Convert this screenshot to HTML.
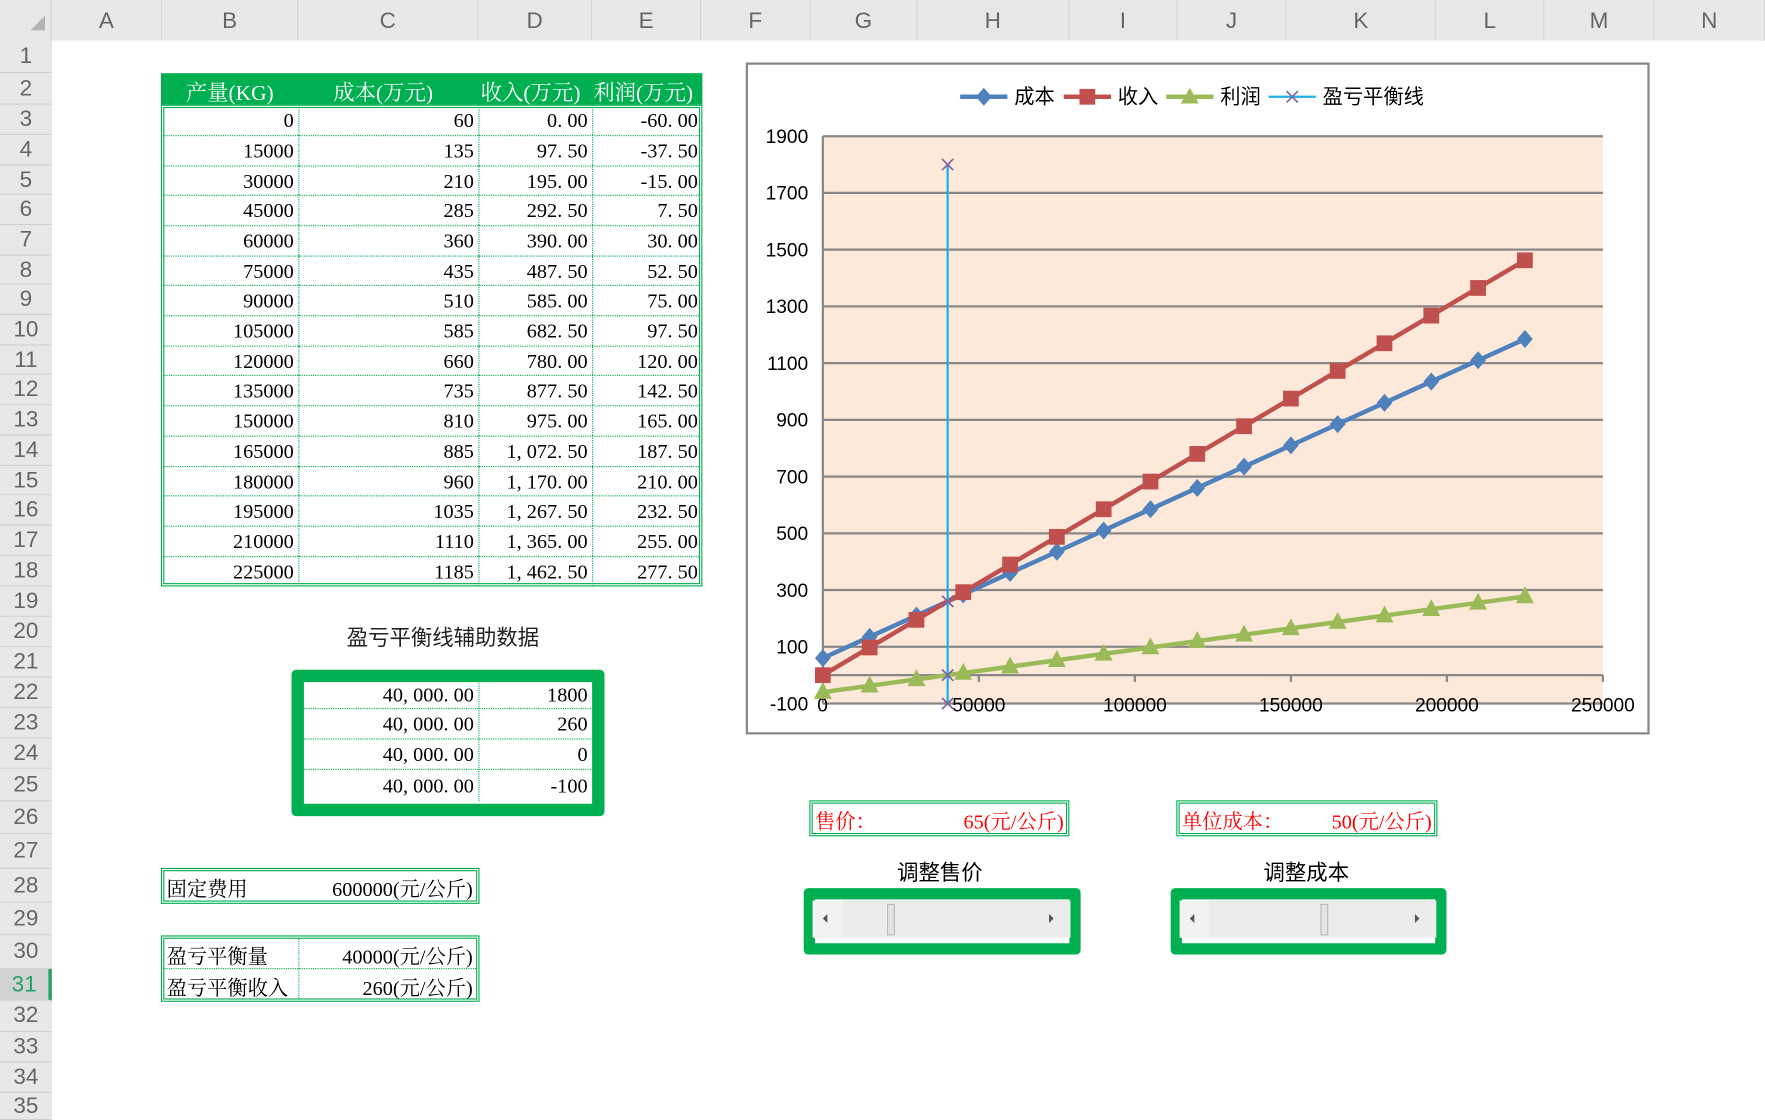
<!DOCTYPE html>
<html><head><meta charset="utf-8">
<style>
html,body{margin:0;padding:0;background:#fff;overflow:hidden;width:1765px;height:1120px}
#w{position:absolute;left:0;top:0;width:1568px;height:995px;transform:scale(1.12564,1.12563);transform-origin:0 0;font-family:"Liberation Serif","Noto Serif CJK SC",serif;}
.a{position:absolute;box-sizing:border-box}
.hd{background:#e8e8e8;color:#666;font-family:"Liberation Sans",sans-serif;font-size:20px;text-align:center}
.num{font-size:18px;text-align:right;color:#000;white-space:nowrap}
.t{font-family:"Liberation Serif","Noto Serif CJK SC",serif}
</style></head><body><div id="w">
<div class="a" style="left:0;top:0;width:1568px;height:36px;background:#e8e8e8;border-bottom:1px solid #c8c8c8"></div>
<div class="a" style="left:0;top:0;width:46px;height:995px;background:#e8e8e8;border-right:1px solid #c8c8c8"></div>
<div id="g"></div>
<div class="a" style="left:27px;top:14px;width:0;height:0;border-left:13px solid transparent;border-bottom:13px solid #b4b4b4"></div>
<svg class="a" style="left:0;top:0" width="1568" height="995" id="s"></svg>
</div>
<script>
var g=document.getElementById('g'),h='';
var cols=[['A',46,144],['B',144,265],['C',265,425],['D',425,526],['E',526,623],['F',623,720],['G',720,815],['H',815,950],['I',950,1046],['J',1046,1143],['K',1143,1276],['L',1276,1372],['M',1372,1470],['N',1470,1568]];
cols.forEach(function(c){h+='<div class="a hd" style="left:'+c[1]+'px;top:0;width:'+(c[2]-c[1])+'px;height:36px;line-height:38px;border-right:1px solid #d4d4d4">'+c[0]+'</div>';});
var rc=[50,79,106,133,160,186,213,240,266,293,320,346,373,400,427,453,480,507,534,561,588,615,642,669,697,726,756,787,816,846,875,903,930,957,984];
for(var i=0;i<35;i++){var tt=i==0?36:(rc[i-1]+rc[i])/2,bot=i==34?995:(rc[i]+rc[i+1])/2;
var st=i==30?'background:#d2d2d2;color:#21a366;border-right:3px solid #21a366;':'';
h+='<div class="a hd" style="left:0;top:'+tt+'px;width:46px;height:'+(bot-tt)+'px;line-height:'+(bot-tt)+'px;border-bottom:1px solid #d0d0d0;'+st+'">'+(i+1)+'</div>';}
function rb(n){return n==1?36:(rc[n-2]+rc[n-1])/2}
var cx=[143,265,425,526,624];
h+='<div class="a" style="left:143px;top:'+rb(2)+'px;width:481px;height:'+(rb(3)-rb(2))+'px;background:#00b050"></div>';
var hdr=['产量(KG)','成本(万元)','收入(万元)','利润(万元)'],hx=[[165,240],[296,392],[427,524],[527,622]];
hdr.forEach(function(t,k){h+='<div class="a t" style="left:'+hx[k][0]+'px;top:'+(rb(2)+3)+'px;color:#fff;font-size:19px;white-space:nowrap">'+t+'</div>';});
h+='<div class="a" style="left:143px;top:'+rb(3)+'px;width:481px;height:'+(rb(19)-rb(3))+'px;border:3px double #00b050"></div>';
function f2(v){var s=Math.abs(v).toFixed(2),p=s.split('.');p[0]=p[0].replace(/\B(?=(\d{3})+(?!\d))/g,', ');return (v<0?'-':'')+p[0]+'. '+p[1];}
for(var r=0;r<16;r++){var x=r*15000,c=60+x*0.005,rv=x*0.0065,pf=rv-c;var t=rb(r+3),b=rb(r+4);
 var vals=[x,c,f2(rv),f2(pf)];
 for(var k=0;k<4;k++){h+='<div class="a num" style="left:'+cx[k]+'px;top:'+t+'px;width:'+(cx[k+1]-cx[k]-4)+'px;height:'+(b-t)+'px;line-height:'+(b-t+2)+'px">'+vals[k]+'</div>';
  if(k<3)h+='<div class="a" style="left:'+cx[k+1]+'px;top:'+t+'px;height:'+(b-t)+'px;border-left:1px dotted #00b050"></div>';}
 if(r<15)h+='<div class="a" style="left:146px;top:'+b+'px;width:475px;border-top:1px dotted #00b050"></div>';}
h+='<div class="a" style="left:308px;top:552px;font-size:19px;font-family:\'Noto Sans CJK SC\',sans-serif;color:#222">盈亏平衡线辅助数据</div>';
h+='<div class="a" style="left:259px;top:595px;width:278px;height:130px;border:11px solid #00b050;border-radius:4px"></div>';
var av=[1800,260,0,-100];
for(var r=0;r<4;r++){var t=r==0?604:rb(r+22),b=r==3?712:rb(r+23);
 h+='<div class="a num" style="left:270px;top:'+t+'px;width:151px;height:'+(b-t)+'px;line-height:'+(b-t+2)+'px">40, 000. 00</div>';
 h+='<div class="a num" style="left:425px;top:'+t+'px;width:97px;height:'+(b-t)+'px;line-height:'+(b-t+2)+'px">'+av[r]+'</div>';
 if(r<3)h+='<div class="a" style="left:270px;top:'+b+'px;width:255px;border-top:1px dotted #00b050"></div>';}
h+='<div class="a" style="left:425px;top:604px;height:108px;border-left:1px dotted #00b050"></div>';
h+='<div class="a" style="left:143px;top:771px;width:283px;height:32px;border:3px double #00b050"></div>';
h+='<div class="a t" style="left:148px;top:776px;font-size:18px">固定费用</div><div class="a num" style="left:265px;top:776px;width:155px">600000(元/公斤)</div>';
h+='<div class="a" style="left:143px;top:831px;width:283px;height:59px;border:3px double #00b050"></div>';
h+='<div class="a" style="left:146px;top:860px;width:277px;border-top:1px dotted #00b050"></div><div class="a" style="left:265px;top:834px;height:53px;border-left:1px dotted #00b050"></div>';
h+='<div class="a t" style="left:148px;top:836px;font-size:18px">盈亏平衡量</div><div class="a num" style="left:265px;top:836px;width:155px">40000(元/公斤)</div>';
h+='<div class="a t" style="left:148px;top:864px;font-size:18px">盈亏平衡收入</div><div class="a num" style="left:265px;top:864px;width:155px">260(元/公斤)</div>';
function pb(x,w,l,r){h+='<div class="a" style="left:'+x+'px;top:711px;width:'+w+'px;height:32px;border:3px double #00b050"></div>';
 h+='<div class="a t" style="left:'+(x+5)+'px;top:716px;font-size:18px;color:#f00">'+l+'</div><div class="a num" style="left:'+x+'px;top:716px;width:'+(w-5)+'px;color:#f00">'+r+'</div>';}
pb(719,231,'售价：','65(元/公斤)');pb(1045,232,'单位成本：','50(元/公斤)');
function sb(x,w,cl,lab,th){h+='<div class="a" style="left:'+(x+(w-80)/2)+'px;top:761px;font-size:19px;font-family:\'Noto Sans CJK SC\',sans-serif">'+lab+'</div>';
 h+='<div class="a" style="left:'+x+'px;top:789px;width:'+w+'px;height:59px;border:10px solid #00b050;border-radius:4px;background:#fff"></div>';
 h+='<div class="a" style="left:'+(x+8)+'px;top:800px;width:'+(w-17)+'px;height:33px;background:#ececec;border-top:1px solid #e2e2e2"></div>';
 h+='<div class="a" style="left:'+(x+8)+'px;top:800px;width:26px;height:33px;background:#f2f2f2"></div>';
 h+='<div class="a" style="left:'+(x+17)+'px;top:812px;border-right:4px solid #555;border-top:4px solid transparent;border-bottom:4px solid transparent"></div>';
 h+='<div class="a" style="left:'+(x+w-28)+'px;top:812px;border-left:4px solid #555;border-top:4px solid transparent;border-bottom:4px solid transparent"></div>';
 h+='<div class="a" style="left:'+th+'px;top:803px;width:7px;height:28px;background:#e4e4e4;border:1px solid #bbb"></div>';}
sb(714,246,0,'调整售价',788);sb(1040,245,0,'调整成本',1173);
g.innerHTML=h;
var s='';
s+='<rect x="663.5" y="56.5" width="801" height="595" fill="#fff" stroke="#888" stroke-width="2"/>';
s+='<rect x="731" y="121" width="693" height="504" fill="#fde9d9"/>';
function Y(v){return 625-(v+100)*0.252}function X(x){return 731+x*693/250000}
for(var v=-100;v<=1900;v+=200){s+='<line x1="731" x2="1424" y1="'+Y(v)+'" y2="'+Y(v)+'" stroke="#888" stroke-width="2"/>';
 s+='<text x="718" y="'+(Y(v)+6)+'" font-size="17" text-anchor="end" font-family="Liberation Sans">'+v+'</text>';}
s+='<line x1="731" x2="731" y1="121" y2="625" stroke="#888" stroke-width="2"/>';
s+='<line x1="731" x2="1424" y1="'+Y(0)+'" y2="'+Y(0)+'" stroke="#888" stroke-width="2"/>';
for(var k=0;k<=5;k++){var xx=X(k*50000);s+='<line x1="'+xx+'" x2="'+xx+'" y1="'+Y(0)+'" y2="'+(Y(0)+6)+'" stroke="#888" stroke-width="2"/>';
 s+='<text x="'+(k==0?726:xx)+'" y="632" font-size="17" text-anchor="'+(k==0?'start':'middle')+'" font-family="Liberation Sans">'+(k*50000)+'</text>';}
var pc=[],pr=[],pp=[];for(var i=0;i<16;i++){var x=i*15000;pc.push([X(x),Y(60+x*.005)]);pr.push([X(x),Y(x*.0065)]);pp.push([X(x),Y(x*.0015-60)]);}
function pl(p,c){return '<polyline fill="none" stroke="'+c+'" stroke-width="4" points="'+p.map(function(q){return q.join(',')}).join(' ')+'"/>';}
s+=pl(pc,'#4f81bd');pc.forEach(function(q){s+='<polygon fill="#4f81bd" points="'+q[0]+','+(q[1]-8)+' '+(q[0]+7)+','+q[1]+' '+q[0]+','+(q[1]+8)+' '+(q[0]-7)+','+q[1]+'"/>';});
s+=pl(pr,'#c0504d');pr.forEach(function(q){s+='<rect fill="#c0504d" x="'+(q[0]-7)+'" y="'+(q[1]-7)+'" width="14" height="14"/>';});
s+=pl(pp,'#9bbb59');pp.forEach(function(q){s+='<polygon fill="#9bbb59" points="'+q[0]+','+(q[1]-9)+' '+(q[0]+8)+','+(q[1]+6)+' '+(q[0]-8)+','+(q[1]+6)+'"/>';});
var bx=X(40000);s+='<line x1="'+bx+'" x2="'+bx+'" y1="'+Y(1800)+'" y2="'+Y(-100)+'" stroke="#1fb0e6" stroke-width="2"/>';
[1800,260,0,-100].forEach(function(v){var y=Y(v);s+='<path d="M'+(bx-5)+' '+(y-5)+'L'+(bx+5)+' '+(y+5)+'M'+(bx+5)+' '+(y-5)+'L'+(bx-5)+' '+(y+5)+'" stroke="#8064a2" stroke-width="1.5"/>';});
s+='<line x1="853" x2="895" y1="86" y2="86" stroke="#4f81bd" stroke-width="4"/><polygon fill="#4f81bd" points="874,78 881,86 874,94 867,86"/><text x="901" y="92" font-size="18" font-family="Noto Sans CJK SC">成本</text>';
s+='<line x1="945" x2="987" y1="86" y2="86" stroke="#c0504d" stroke-width="4"/><rect fill="#c0504d" x="959" y="79" width="14" height="14"/><text x="993" y="92" font-size="18" font-family="Noto Sans CJK SC">收入</text>';
s+='<line x1="1036" x2="1078" y1="86" y2="86" stroke="#9bbb59" stroke-width="4"/><polygon fill="#9bbb59" points="1057,78 1065,92 1049,92"/><text x="1084" y="92" font-size="18" font-family="Noto Sans CJK SC">利润</text>';
s+='<line x1="1127" x2="1169" y1="86" y2="86" stroke="#1fb0e6" stroke-width="2"/><path d="M1143 81L1153 91M1153 81L1143 91" stroke="#8064a2" stroke-width="1.5"/><text x="1175" y="92" font-size="18" font-family="Noto Sans CJK SC">盈亏平衡线</text>';
document.getElementById('s').innerHTML=s;
</script>
</body></html>
